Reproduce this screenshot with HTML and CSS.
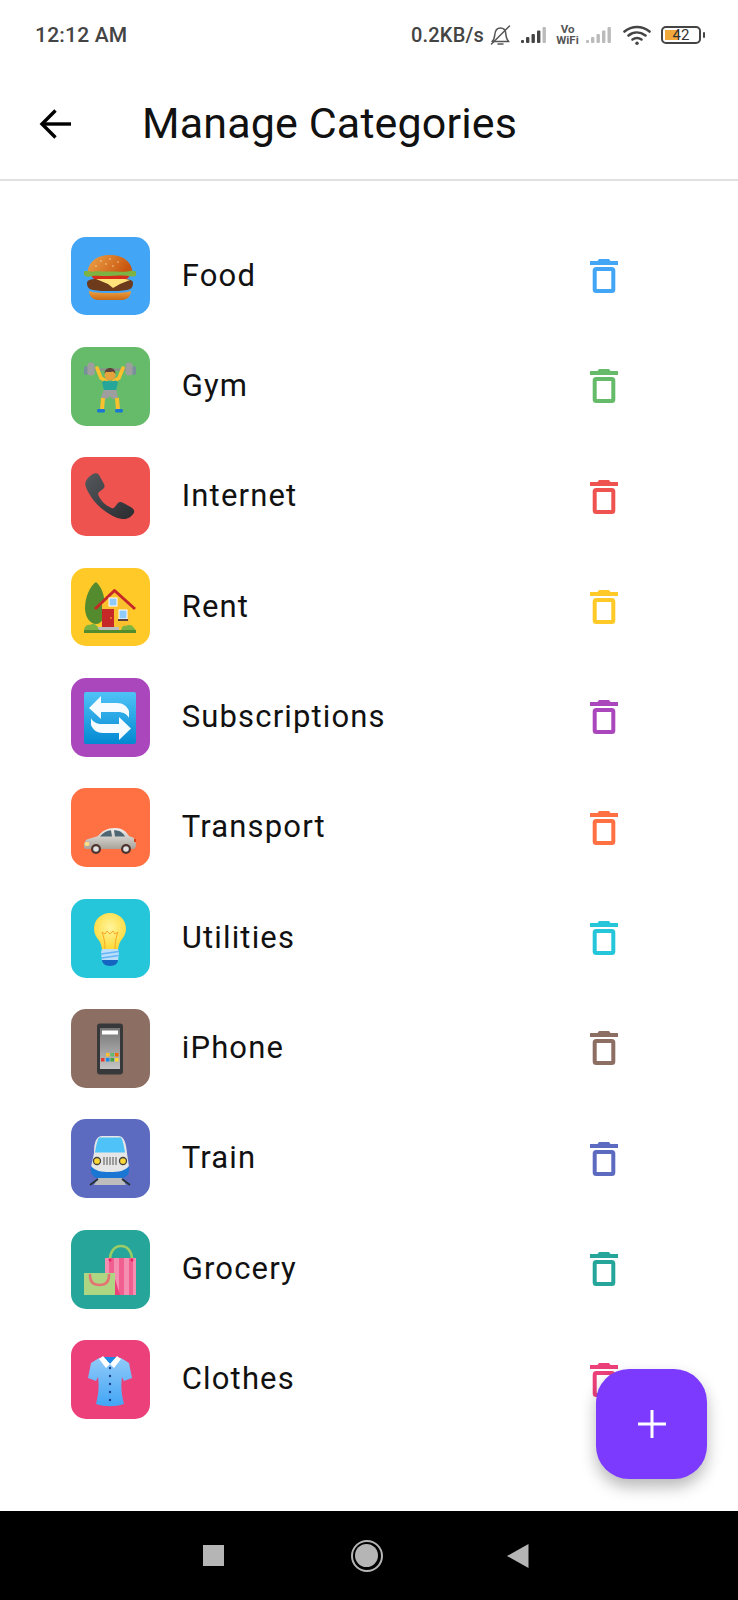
FILE: index.html
```html
<!DOCTYPE html>
<html lang="en">
<head>
<meta charset="utf-8">
<title>Manage Categories</title>
<link rel="stylesheet" href="styles.css">
</head>
<body>
<svg class="sprite" width="0" height="0" aria-hidden="true">
  <defs>
    <symbol id="trash" viewBox="0 0 28 34">
      <path fill="currentColor" d="M9 0h10l1.500 2H28v4H0V2h7.500z"/>
      <rect x="4.700" y="10" width="18.600" height="22" rx="1.500" fill="none" stroke="currentColor" stroke-width="4"/>
    </symbol>
    <symbol id="signal" viewBox="0 0 26 17">
      <rect x="0" y="13" width="3" height="3" rx="1"/>
      <rect x="5" y="10" width="3.400" height="6" rx="1"/>
      <rect x="10.500" y="7" width="3.400" height="9" rx="1"/>
      <rect x="16" y="3.500" width="3.400" height="12.500" rx="1"/>
      <rect class="sig-last" x="21.500" y="0" width="3.400" height="16" rx="1"/>
    </symbol>
  </defs>
</svg>

<div class="page">
  <header class="status">
    <span class="clock">12:12 AM</span>
    <div class="status-right">
      <span class="speed">0.2KB/s</span>
      <svg class="bell" width="21" height="21" viewBox="0 0 21 21" fill="none" stroke="#555" stroke-width="1.500" stroke-linecap="round" stroke-linejoin="round">
        <path d="M2 16.500c2.500-2 2.500-4 2.800-7C5.200 5.200 7.500 3 10.500 3s5 2 5.300 5.500c.3 3.500.5 6 3 8z"/>
        <path d="M8 19h5"/><path d="M1.500 19 19.500 1"/>
      </svg>
      <svg class="signal" width="26" height="17"><use href="#signal"/></svg>
      <span class="vowifi"><span>Vo</span><span>WiFi</span></span>
      <svg class="signal signal-weak" width="26" height="17"><use href="#signal"/></svg>
      <svg class="wifi" width="29" height="21" viewBox="0 0 29 21" fill="none" stroke="#444" stroke-width="2.600" stroke-linecap="round">
        <path d="M1.500 6.500C9 .5 19 .5 26.500 6.500"/>
        <path d="M5.500 10.500c5-4 11.500-4 17 0"/>
        <path d="M9.500 14.500c3-2 6-2 9 0"/>
        <circle cx="14" cy="18.300" r="1.700" fill="#444" stroke="none"/>
      </svg>
      <div class="battery">
        <div class="battery-body"><span class="battery-fill"></span><span class="battery-num">42</span></div>
        <span class="battery-cap"></span>
      </div>
    </div>
  </header>

  <div class="appbar">
    <svg class="back" width="32" height="30" viewBox="0 0 32 30" fill="none" stroke="#000" stroke-width="3.400">
      <path d="M32 15H3"/><path d="M16.500 1.500 3 15l13.500 13.500"/>
    </svg>
    <h1 class="title">Manage Categories</h1>
  </div>

  <main class="list">
    <div class="row">
      <div class="tile t-blue">
        <svg class="emoji" viewBox="0 0 52 52">
          <defs>
            <linearGradient id="bun" x1="0" x2="1" y1="0" y2="0.300"><stop offset="0" stop-color="#eda54a"/><stop offset="1" stop-color="#c9560f"/></linearGradient>
            <linearGradient id="bunb" x1="0" x2="0" y1="0" y2="1"><stop offset="0" stop-color="#f0a040"/><stop offset="1" stop-color="#c96a18"/></linearGradient>
          </defs>
          <path fill="url(#bun)" d="M3.500 24C3.500 12 13 5 26 5s22.500 7 22.500 19z"/>
          <g fill="#ffe6b0"><circle cx="17" cy="11" r=".7"/><circle cx="26" cy="9" r=".7"/><circle cx="34" cy="12" r=".7"/><circle cx="22" cy="14" r=".7"/><circle cx="12" cy="16" r=".7"/><circle cx="29" cy="16" r=".7"/></g>
          <path fill="#7cb342" d="M0 21.500c3-1.500 6 1 10 0s8 .5 16 0 12 1 17 0 6-1 9 0v4c-3 2-5 0-9 1.500s-8 0-13 1-9-.5-14 0-7-2-10-1.500-5 0-6-2z"/>
          <path fill="#d62c1a" d="M8 26c6-1 10 .5 18 0s12-1 19 0c0 3-5 4-9 4H16c-4 0-8-1-8-4z"/>
          <path fill="#6d3a1c" d="M3 33c0-3 4-4 9-4h28c5 0 9 1 9 4s-1 6-6 7c-6 1-11 1-17 1-6 0-12 0-17-1-5-1-6-4-6-7z"/>
          <path fill="#ffe27a" d="M12 29h29l5 1-10 4-7 4-5-4z"/>
          <path fill="url(#bunb)" d="M5 41c6 2 14 2 21 2s15 0 21-2c0 5-4 9-9 9H14c-5 0-9-4-9-9z"/>
        </svg>
      </div>
      <span class="name">Food</span>
      <svg class="trash c-blue"><use href="#trash"/></svg>
    </div>

    <div class="row">
      <div class="tile t-green">
        <svg class="emoji" viewBox="0 0 52 52">
          <rect x="6" y="8.500" width="40" height="2.200" fill="#8e8e8e"/>
          <rect x="0" y="6" width="4" height="9" rx="2" fill="#78909c"/><rect x="3.500" y="2.500" width="7" height="13" rx="3" fill="#9e9e9e"/>
          <rect x="48" y="6" width="4" height="9" rx="2" fill="#78909c"/><rect x="41.500" y="2.500" width="7" height="13" rx="3" fill="#9e9e9e"/>
          <path fill="none" stroke="#fbc02d" stroke-width="3.600" stroke-linecap="round" stroke-linejoin="round" d="M13 8l4 10 5 3M39 8l-4 10-5 3"/>
          <circle cx="26" cy="15" r="5.500" fill="#e6a23c"/>
          <path fill="#5d4037" d="M20.500 14c0-4 2.500-6 5.500-6s5.500 2 5.500 6c-1-1.500-2-2.500-3-2.500-2 .7-5 .7-6 .2-1 .5-1.500 1-2 2.300z"/>
          <path fill="#26a69a" d="M20 20.500c2 1 10 1 12 0l2 2-2 8H20l-2-8z"/>
          <path fill="#9e9e9e" d="M19.500 30h13l1.500 8-5 1-3-2.500L22 39l-5-1z"/>
          <path fill="none" stroke="#fbc02d" stroke-width="4" d="M19 38l-1 12M33 38l1 12"/>
          <rect x="13" y="49" width="8" height="3.500" rx="1.500" fill="#1976d2"/><rect x="31" y="49" width="8" height="3.500" rx="1.500" fill="#1976d2"/>
        </svg>
      </div>
      <span class="name">Gym</span>
      <svg class="trash c-green"><use href="#trash"/></svg>
    </div>

    <div class="row">
      <div class="tile t-red">
        <svg class="emoji" viewBox="0 0 52 52">
          <defs><linearGradient id="ph" x1="0" x2="1" y1="0" y2="1"><stop offset="0" stop-color="#55585c"/><stop offset="1" stop-color="#2a2c30"/></linearGradient></defs>
          <path fill="url(#ph)" d="M9 3c2-1.500 5-1 6 1l5 9c1 2 .5 4-1 5l-4 3c-1 1-1 2-.5 3.500 3 6 6.500 9.500 13 12.500 1.500.5 2.500.2 3.300-1l2.700-3.500c1-1.500 3-2 5-1l9 5c2.500 1.500 3.500 4 2 6-2 3-5 5-8 5.500-5 .6-13-2-22-9C10 32 4 22 1.500 15 .5 10 4 6 9 3z"/>
        </svg>
      </div>
      <span class="name">Internet</span>
      <svg class="trash c-red"><use href="#trash"/></svg>
    </div>

    <div class="row">
      <div class="tile t-amber">
        <svg class="emoji" viewBox="0 0 52 52">
          <path fill="#558b2f" d="M12 1c5 4 9 13 9 26 0 9-3 16-9 16S1 36 1 27C1 16 6 5 12 1z"/>
          <rect x="18" y="20" width="28" height="26" fill="#fbc02d"/>
          <path fill="#fbc02d" d="M18 22l14-14 14 14z"/>
          <path fill="none" stroke="#c62828" stroke-width="3" stroke-linejoin="round" d="M11 28 30.500 9.500 51 28"/>
          <rect x="18" y="28" width="12" height="18" fill="#c62828"/>
          <circle cx="27" cy="37" r=".8" fill="#ffca28"/>
          <rect x="25" y="17" width="8" height="8" fill="#90caf9" stroke="#fff" stroke-width="1"/>
          <rect x="35" y="29" width="8" height="9" fill="#90caf9" stroke="#fff" stroke-width="1"/>
          <rect x="34" y="38" width="10" height="2" fill="#5d4037"/>
          <rect x="13" y="46" width="22" height="3" fill="#bdbdbd"/>
          <path fill="#7cb342" d="M0 50c0-4 3-7 6-6 2-2 6-1 7 1 1 1 2 3 2 5zM37 50c0-3 2-6 5-5 2-2 7-1 8 2 1 1 2 2 2 3z"/>
          <rect x="0" y="49" width="52" height="3" fill="#558b2f"/>
        </svg>
      </div>
      <span class="name">Rent</span>
      <svg class="trash c-amber"><use href="#trash"/></svg>
    </div>

    <div class="row">
      <div class="tile t-purple">
        <svg class="emoji" viewBox="0 0 52 52">
          <defs><linearGradient id="rp" x1="0" x2="0" y1="0" y2="1"><stop offset="0" stop-color="#4fc3f7"/><stop offset="1" stop-color="#0288d1"/></linearGradient></defs>
          <rect x="0" y="1" width="52" height="52" rx="2" fill="url(#rp)"/>
          <path fill="#f5fbff" d="M17 5v7h16c6 0 10 3 12 8v7c-2-4-6-6-11-6H17v7L5 17z"/>
          <path fill="#f5fbff" d="M35 49v-7H19c-6 0-10-3-12-8v-7c2 4 6 6 11 6h17v-7l12 11.500z"/>
        </svg>
      </div>
      <span class="name">Subscriptions</span>
      <svg class="trash c-purple"><use href="#trash"/></svg>
    </div>

    <div class="row">
      <div class="tile t-orange">
        <svg class="emoji" viewBox="0 0 52 52">
          <defs><linearGradient id="cb" x1="0" x2="0" y1="0" y2="1"><stop offset="0" stop-color="#f0f0ee"/><stop offset="1" stop-color="#a8a29a"/></linearGradient></defs>
          <path fill="url(#cb)" d="M0 45c0-4 1-7 4-8 4-1 7-2 10-3 4-5 9-8 17-8 7 0 11 3 14 8 3 1 6 2 6 5l1 3c0 3-1 5-3 5H3c-2 0-3-1-3-2z"/>
          <path fill="#4d6672" d="M16 34.500c3-4 7-6 11-6.300l1 6.300zM30 28.200c5 0 9 2 11 6.300H31z"/>
          <ellipse cx="3" cy="42" rx="2.500" ry="2" fill="#ffe082"/>
          <circle cx="12" cy="47" r="5" fill="#4e342e"/><circle cx="12" cy="47" r="2.800" fill="#e0e0e0"/>
          <circle cx="42" cy="47" r="5" fill="#4e342e"/><circle cx="42" cy="47" r="2.800" fill="#e0e0e0"/>
          <rect x="50" y="37" width="2" height="3" fill="#d84315"/>
        </svg>
      </div>
      <span class="name">Transport</span>
      <svg class="trash c-orange"><use href="#trash"/></svg>
    </div>

    <div class="row">
      <div class="tile t-cyan">
        <svg class="emoji" viewBox="0 0 52 52">
          <defs>
            <radialGradient id="bl" cx=".5" cy=".4" r=".6"><stop offset="0" stop-color="#fff59d"/><stop offset="1" stop-color="#fdd835"/></radialGradient>
          </defs>
          <path fill="url(#bl)" d="M26 1c9 0 16 7 16 15.500 0 5-2 8-5 12-1.500 2-2.500 5-3 9H18c-.5-4-1.500-7-3-9-3-4-5-7-5-12C10 8 17 1 26 1z"/>
          <path fill="none" stroke="#f9a825" stroke-width="1" d="M21 37c0-6-1-12-3-17l3 2 2-3 3 3 3-3 2 3 3-2c-2 5-3 11-3 17"/>
          <path fill="#bbdefb" d="M18 37h16l1 3-1 9H18l-1-9z"/>
          <path fill="none" stroke="#64b5f6" stroke-width="1.500" d="M17 42l18-2.500M17.500 46l17-2.500"/>
          <path fill="#1565c0" d="M18 48h16c0 3-3 6-8 6s-8-3-8-6z"/>
        </svg>
      </div>
      <span class="name">Utilities</span>
      <svg class="trash c-cyan"><use href="#trash"/></svg>
    </div>

    <div class="row">
      <div class="tile t-brown">
        <svg class="emoji" viewBox="0 0 52 52">
          <defs><linearGradient id="sc" x1="0" x2="0" y1="0" y2="1"><stop offset="0" stop-color="#757575"/><stop offset="1" stop-color="#c4c4c4"/></linearGradient></defs>
          <rect x="13" y="1.500" width="26" height="51" rx="3" fill="#37383a"/>
          <rect x="16" y="6" width="20" height="41" fill="url(#sc)"/>
          <rect x="18" y="8.500" width="16" height="4" fill="#fff"/>
          <g>
            <rect x="22" y="31" width="3.500" height="3.500" fill="#fbc02d"/><rect x="26.500" y="31" width="3.500" height="3.500" fill="#66bb6a"/><rect x="31" y="31" width="3.500" height="3.500" fill="#ef6c00"/>
            <rect x="17" y="36" width="3.500" height="3.500" fill="#e53935"/><rect x="22" y="36" width="3.500" height="3.500" fill="#1e88e5"/><rect x="26.500" y="36" width="3.500" height="3.500" fill="#43a047"/><rect x="31" y="36" width="3.500" height="3.500" fill="#fdd835"/>
          </g>
        </svg>
      </div>
      <span class="name">iPhone</span>
      <svg class="trash c-brown"><use href="#trash"/></svg>
    </div>

    <div class="row">
      <div class="tile t-indigo">
        <svg class="emoji" viewBox="0 0 52 52">
          <path fill="#e6e6e6" d="M10 20C10 8 13 3 18 3h16c6 0 8 6 9 17l2 14c0 5-2 9-8 9H15c-6 0-8-4-8-9z"/>
          <path fill="#4fc3f7" d="M15 4.500h22c2 3 3 9 4 15H11c1-6 2-12 4-15z"/>
          <path fill="#1976d2" d="M7 33c4 5 10 6 19 6s15-1 19-6c1 6-1 12-8 12H15c-7 0-9-6-8-12z"/>
          <circle cx="13" cy="28" r="3.500" fill="#fdd835" stroke="#424242" stroke-width="1.300"/>
          <circle cx="39" cy="28" r="3.500" fill="#fdd835" stroke="#424242" stroke-width="1.300"/>
          <path stroke="#757575" stroke-width="1.300" d="M20 24v8M23 24v8M26 24v8M29 24v8M32 24v8"/>
          <path fill="#bdbdbd" d="M14 45h24l4 7H10z"/>
          <path stroke="#263238" stroke-width="1.800" d="M14 46 6 52M38 46l8 6"/>
        </svg>
      </div>
      <span class="name">Train</span>
      <svg class="trash c-indigo"><use href="#trash"/></svg>
    </div>

    <div class="row">
      <div class="tile t-teal">
        <svg class="emoji" viewBox="0 0 52 52">
          <path fill="none" stroke="#9ccc65" stroke-width="2.600" d="M26 17c0-9 5-14 11-14s11 5 11 14"/>
          <rect x="21" y="15" width="31" height="37" fill="#f48fb1"/>
          <path fill="#ec407a" d="M25 15h5v37h-5zM35 15h5v37h-5zM45 15h4v37h-4z" opacity=".6"/>
          <circle cx="26" cy="17" r="1.500" fill="#e91e63"/><circle cx="48" cy="17" r="1.500" fill="#e91e63"/>
          <rect x="0" y="30" width="31" height="22" fill="#aed581"/>
          <path fill="#ec407a" d="M31 36l5 16h-5z"/>
          <path fill="none" stroke="#e57373" stroke-width="2.600" stroke-linecap="round" d="M6 32c0 7 4 10 9.500 10S25 39 25 32"/>
        </svg>
      </div>
      <span class="name">Grocery</span>
      <svg class="trash c-teal"><use href="#trash"/></svg>
    </div>

    <div class="row">
      <div class="tile t-pink">
        <svg class="emoji" viewBox="0 0 52 52">
          <defs><linearGradient id="sh" x1="0" x2="0" y1="0" y2="1"><stop offset="0" stop-color="#90caf9"/><stop offset="1" stop-color="#42a5f5"/></linearGradient></defs>
          <path fill="url(#sh)" d="M15 4 7 9 4 24l8 3 2-4c1 8 1 16-2 27 9 3 19 3 28 0-3-11-3-19-2-27l2 4 8-3-3-15-8-5z"/>
          <path fill="#1e88e5" d="M19 3h14l-7 7z"/>
          <path fill="#fff" d="M15 5l4-3 7 8-4 4zM37 5l-4-3-7 8 4 4z"/>
          <g fill="#1a3f8c"><circle cx="26" cy="14" r="1.200"/><circle cx="26" cy="22" r="1.200"/><circle cx="26" cy="30" r="1.200"/><circle cx="26" cy="38" r="1.200"/><circle cx="26" cy="46" r="1.200"/></g>
        </svg>
      </div>
      <span class="name">Clothes</span>
      <svg class="trash c-pink"><use href="#trash"/></svg>
    </div>
  </main>

  <button class="fab" aria-label="Add category">
    <svg width="28" height="28" viewBox="0 0 28 28" fill="none" stroke="#fff" stroke-width="3"><path d="M14 0v28M0 14h28"/></svg>
  </button>

  <footer class="navbar">
    <span class="nav-square"></span>
    <span class="nav-circle"><span class="nav-dot"></span></span>
    <svg width="22" height="24" viewBox="0 0 22 24"><path fill="#b5b5b5" d="M21.500 0v24L0 12z"/></svg>
  </footer>
</div>
</body>
</html>
```

FILE: styles.css
```css
* { box-sizing: border-box; margin: 0; padding: 0; }
html, body { background: #fff; }
body { font-family: Roboto, "Noto Sans", sans-serif; color: #111; }
.sprite { position: absolute; }

.page {
  position: relative;
  width: 738px;
  height: 1600px;
  display: flex;
  flex-direction: column;
  overflow: hidden;
}

/* Status bar */
.status {
  height: 68px;
  padding: 12px 33px 0 35px;
  display: flex;
  align-items: flex-start;
  justify-content: space-between;
  color: #444;
}
.clock { font-size: 21px; font-weight: 500; line-height: 46px; letter-spacing: .2px; }
.status-right { display: flex; align-items: center; height: 46px; }
.speed { font-size: 20px; font-weight: 500; letter-spacing: .2px; margin-right: 6px; }
.bell { margin-right: 10px; }
.signal { fill: #444; margin-right: 9px; }
.sig-last { fill: #bbb; }
.signal-weak { fill: #bbb; margin-right: 11px; }
.vowifi {
  display: flex;
  flex-direction: column;
  align-items: center;
  width: 23px;
  margin-right: 7px;
  font-size: 11.500px;
  font-weight: 700;
  line-height: 11px;
  color: #555;
}
.wifi { margin-right: 9px; }
.battery { display: flex; align-items: center; gap: 2px; }
.battery-body {
  position: relative;
  width: 40px;
  height: 18px;
  border: 2px solid #444;
  border-radius: 5px;
  display: flex;
  align-items: center;
  justify-content: center;
}
.battery-fill { position: absolute; left: 2px; top: 2px; bottom: 2px; width: 14px; background: #f2a93b; }
.battery-num { position: relative; font-size: 15px; line-height: 14px; color: #333; }
.battery-cap { width: 2px; height: 6px; background: #444; border-radius: 1px; }

/* App bar */
.appbar {
  height: 113px;
  padding-left: 39px;
  display: flex;
  align-items: center;
  border-bottom: 2px solid #e0e0e0;
}
.back { flex: none; margin-right: 71px; }
.title { font-size: 43px; font-weight: 400; color: #111; letter-spacing: .15px; padding-bottom: 2px; }

/* List */
.list {
  flex: 1;
  padding: 55.700px 120px 0 71px;
  display: flex;
  flex-direction: column;
  gap: 31.600px;
}
.row { display: flex; align-items: center; height: 78.750px; }
.tile {
  flex: none;
  width: 78.750px;
  height: 78.750px;
  border-radius: 15px;
  display: flex;
  align-items: center;
  justify-content: center;
  margin-right: 32px;
}
.emoji { width: 52px; height: 52px; overflow: visible; }
.name { flex: 1; font-size: 31px; letter-spacing: 1.150px; color: #111; padding-bottom: 2px; }
.trash { flex: none; width: 28px; height: 34px; }

.t-blue { background: #42a5f5; }
.t-green { background: #66bb6a; }
.t-red { background: #ef5350; }
.t-amber { background: #ffca28; }
.t-purple { background: #ab47bc; }
.t-orange { background: #ff7043; }
.t-cyan { background: #26c6da; }
.t-brown { background: #8d6e63; }
.t-indigo { background: #5c6bc0; }
.t-teal { background: #26a69a; }
.t-pink { background: #ec407a; }
.c-blue { color: #42a5f5; }
.c-green { color: #66bb6a; }
.c-red { color: #ef5350; }
.c-amber { color: #ffca28; }
.c-purple { color: #ab47bc; }
.c-orange { color: #ff7043; }
.c-cyan { color: #26c6da; }
.c-brown { color: #8d6e63; }
.c-indigo { color: #5c6bc0; }
.c-teal { color: #26a69a; }
.c-pink { color: #ec407a; }

/* Floating action button */
.fab {
  position: absolute;
  left: 596px;
  top: 1369px;
  width: 111px;
  height: 110px;
  border: 0;
  border-radius: 33px;
  background: #7c3aff;
  box-shadow: 0 8px 16px rgba(0, 0, 0, .28);
  display: flex;
  align-items: center;
  justify-content: center;
}

/* Navigation bar */
.navbar {
  flex: none;
  height: 89px;
  background: #000;
  padding: 0 209px 0 203px;
  display: flex;
  align-items: center;
  justify-content: space-between;
}
.nav-square { width: 21px; height: 21px; background: #b5b5b5; }
.nav-circle {
  width: 32px;
  height: 32px;
  margin-left: 2px;
  border: 2px solid #b5b5b5;
  border-radius: 50%;
  display: flex;
  align-items: center;
  justify-content: center;
}
.nav-dot { width: 23px; height: 23px; background: #b5b5b5; border-radius: 50%; }
```
